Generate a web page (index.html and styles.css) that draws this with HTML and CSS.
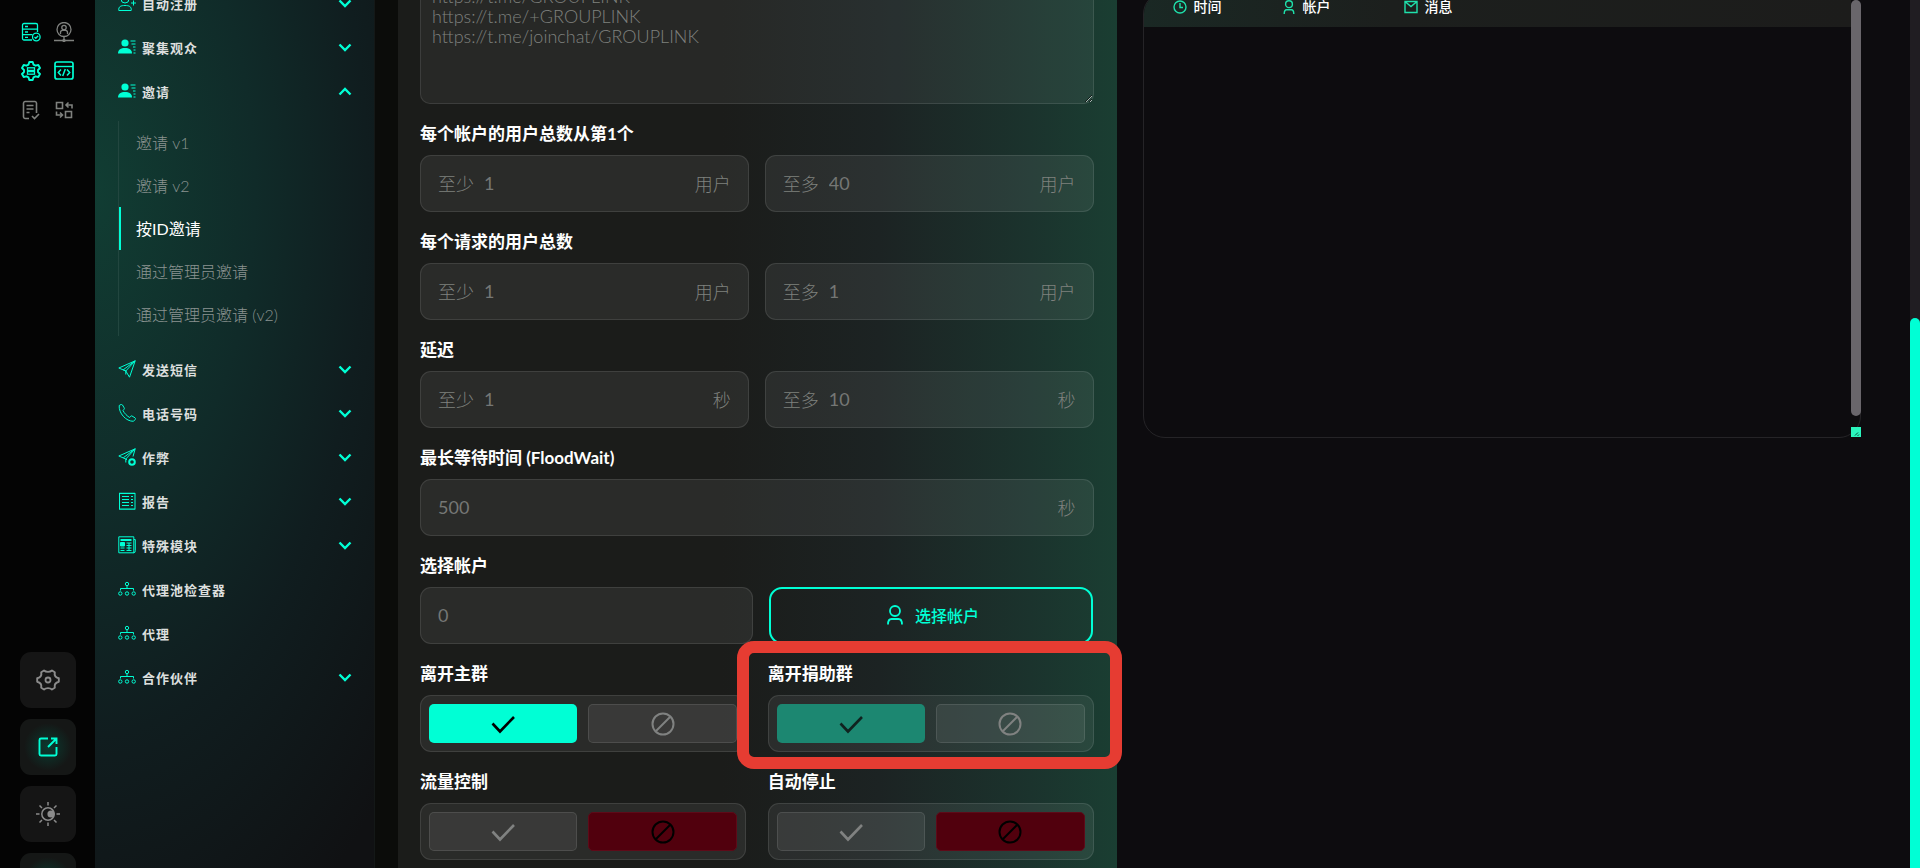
FILE: index.html
```html
<!DOCTYPE html>
<html lang="zh-CN">
<head>
  <meta charset="UTF-8">
  <meta name="viewport" content="width=device-width, initial-scale=1">
  <title>按ID邀请</title>
  <link rel="stylesheet" href="styles.css">
</head>
<body>

<!-- shared icons -->
<svg class="sprite" aria-hidden="true">
  <symbol id="i-down" viewBox="0 0 14 9"><path d="M1.500 1.500L7 7l5.500-5.500" stroke-width="2.400"/></symbol>
  <symbol id="i-up" viewBox="0 0 14 9"><path d="M1.500 7.500L7 2l5.500 5.500" stroke-width="2.400"/></symbol>
  <symbol id="i-people" viewBox="0 0 18 18">
    <circle cx="7" cy="5" r="3.6" fill="currentColor" stroke="none"/>
    <path d="M0 15.5c0-4 3-5.500 7-5.500s7 1.500 7 5.500z" fill="currentColor" stroke="none"/>
    <path d="M12.500 3h5M13.500 6h4M15 9h2.500M15.500 12h2M15.500 15h2"/>
  </symbol>
  <symbol id="i-net" viewBox="0 0 18 18">
    <circle cx="9" cy="4" r="1.700"/><path d="M9 6v3M2.500 10.500V8.500h13v2"/>
    <circle cx="2.300" cy="13.500" r="1.700"/><circle cx="9" cy="13.500" r="1.700"/><circle cx="15.700" cy="13.500" r="1.700"/>
  </symbol>
  <symbol id="i-user" viewBox="0 0 16 20"><circle cx="8" cy="6" r="5"/><path d="M1 19.500c0-4 1.500-5.500 3.500-5.500h7c2 0 3.500 1.500 3.500 5.500"/></symbol>
  <symbol id="i-check" viewBox="0 0 24 24"><path d="M1.500 11.500l7.500 8L23 5" stroke-width="2.600"/></symbol>
  <symbol id="i-ban" viewBox="0 0 24 24"><circle cx="12" cy="12" r="10.500" stroke-width="2"/><path d="M5 19L19 5" stroke-width="2"/></symbol>
</svg>

<nav class="rail" aria-label="面板">
  <div class="rail-top">
    <a class="on" href="#servers" aria-label="服务器"><svg viewBox="0 0 20 20"><path d="M11 18H3a1.500 1.500 0 0 1-1.500-1.500v-3.800h10M1.500 7.200h15M1.500 12.700V3A1.500 1.500 0 0 1 3 1.500h12A1.500 1.500 0 0 1 16.500 3v7M4 4.500h3M4 10h3M4 15.300h3"/><circle cx="15.300" cy="15" r="3.800"/><path d="M13.500 15l1.300 1.300 2.400-2.500"/></svg></a>
    <a href="#profile" aria-label="用户"><svg viewBox="0 0 20 20"><circle cx="10" cy="7.500" r="7"/><circle cx="10" cy="5.500" r="2.200"/><path d="M6.500 12V10.500c0-1.500 1-2.200 2-2.200h3c1 0 2 .7 2 2.200V12M10 15v3M0 18.500h20"/><circle cx="10" cy="18.500" r="1"/></svg></a>
    <a class="on" href="#config" aria-label="配置"><svg viewBox="0 0 20 20"><path d="M8.300 1h3.400l.8 2.600 2 1.100L17.300 4 19 7l-2 2v2l2 2-1.700 3-2.800-.7-2 1.100-.8 2.600H8.300l-.8-2.600-2-1.100-2.800.7L1 13l2-2V9L1 7l1.700-3 2.800.7 2-1.100z" stroke-width="1.900" stroke-linejoin="round"/><rect x="6.500" y="6.800" width="7" height="2.600"/><rect x="6.500" y="10.600" width="7" height="2.600"/></svg></a>
    <a class="on" href="#code" aria-label="代码"><svg viewBox="0 0 20 20"><rect x="1" y="1" width="18" height="17" rx="2" stroke-width="1.700"/><path d="M1 5.500h18" stroke-width="1.400"/><path d="M7 8.500l-2.700 3L7 14.500M13 8.500l2.700 3-2.700 3M11.300 8l-2.600 7" stroke-width="1.500"/></svg></a>
    <a href="#tasks" aria-label="任务"><svg viewBox="0 0 20 20"><path d="M8 18.500H4A1.800 1.800 0 0 1 2.500 17V3A1.800 1.800 0 0 1 4 1.500h10A1.800 1.800 0 0 1 15.500 3v10M5.500 5.500h7M5.500 9h7M5.500 12.500h3M11 16l2.500 2.500 4.500-4.500" stroke-width="1.600"/></svg></a>
    <a href="#swap" aria-label="转换"><svg viewBox="0 0 20 20"><path d="M2.500 2.500h6v6h-6zM11.500 11.500h6v6h-6zM18 8.500V5h-6M14.500 2.500L12 5l2.500 2.500M2.500 11.500V15h6M6 12.500L8.500 15 6 17.500" stroke-width="1.600"/></svg></a>
  </div>
  <div class="rail-bottom">
    <button type="button" aria-label="设置"><svg viewBox="0 0 24 24"><path d="M8 2.500c2 1.800 6 1.800 8 0l2.800 1.700c-.6 3 .8 5.300 4 6v3.600c-3.200.7-4.600 3-4 6L16 21.500c-2-1.800-6-1.800-8 0l-2.800-1.700c.6-3-.8-5.300-4-6v-3.600c3.200-.7 4.600-3 4-6z" stroke-width="1.900" stroke-linejoin="round"/><circle cx="12" cy="12" r="2.500" stroke-width="1.800"/></svg></button>
    <button class="on" type="button" aria-label="打开"><svg viewBox="0 0 24 24"><path d="M12 3.500H5A1.500 1.500 0 0 0 3.500 5v14A1.500 1.500 0 0 0 5 20.500h14a1.500 1.500 0 0 0 1.500-1.500v-7M15 3.500h5.500V9M20.500 3.500L12 12" stroke-width="1.900"/></svg></button>
    <button type="button" aria-label="主题"><svg viewBox="0 0 24 24"><circle cx="12" cy="12" r="6.200" stroke-width="1.500"/><circle cx="15" cy="12" r="3.600" fill="currentColor" stroke="none"/><path d="M12 0v3.500M12 20.500V24M0 12h3.500M20.500 12H24M3.500 3.500L6 6M18 18l2.500 2.500M3.500 20.500L6 18M18 6l2.500-2.500" stroke-width="1.500"/></svg></button>
    <button class="on" type="button" aria-label="帮助"></button>
  </div>
</nav>

<aside class="sidebar">
  <ul class="menu">
    <li><button type="button"><svg class="ico" viewBox="0 0 18 18"><circle cx="7" cy="5" r="4"/><path d="M.8 16.500c-.5-4 2-5 6.200-5s6.700 1 6.200 5zM13 9h5M15.500 6.500v5"/></svg>自动注册<svg class="chev"><use href="#i-down"/></svg></button></li>
    <li><button type="button"><svg class="ico"><use href="#i-people"/></svg>聚集观众<svg class="chev"><use href="#i-down"/></svg></button></li>
    <li>
      <button type="button" aria-expanded="true"><svg class="ico"><use href="#i-people"/></svg>邀请<svg class="chev"><use href="#i-up"/></svg></button>
      <ul class="submenu">
        <li><a href="#v1">邀请 v1</a></li>
        <li><a href="#v2">邀请 v2</a></li>
        <li><a class="active" href="#id">按ID邀请</a></li>
        <li><a href="#admin">通过管理员邀请</a></li>
        <li><a href="#admin2">通过管理员邀请 (v2)</a></li>
      </ul>
    </li>
    <li><button type="button"><svg class="ico" viewBox="0 0 18 18"><path d="M.8 8L17.200.8 11.500 17.200 7.800 11zM7.800 11l-2.500-1.200L17.200.8zM7.800 11v3.500"/></svg>发送短信<svg class="chev"><use href="#i-down"/></svg></button></li>
    <li><button type="button"><svg class="ico" viewBox="0 0 18 18"><path d="M1.200 1.500C.5 9 8 17.500 15.500 17.300l1.800-2c.4-.6.2-1-.3-1.500l-3-1.800c-.6-.3-1-.2-1.400.3l-.9 1.200C9.500 12.500 6 9 5 6.500l1-1.200c.4-.5.500-.9.200-1.400L4.500 1C4 .4 3.500.3 3 .5z"/></svg>电话号码<svg class="chev"><use href="#i-down"/></svg></button></li>
    <li><button type="button"><svg class="ico" viewBox="0 0 18 18"><path d="M9 11.800L7.800 11l-7-3L17.200.8 15 8.500M17.200.8L5.300 9.800M17.200.8L7.800 11v3.500"/><circle cx="14" cy="14" r="2.800" stroke-width="2"/></svg>作弊<svg class="chev"><use href="#i-down"/></svg></button></li>
    <li><button type="button"><svg class="ico" viewBox="0 0 18 18"><rect x="1.500" y="1.500" width="15.500" height="15.500"/><path d="M1.500 1h15.500M1.500 17.500h15.500" stroke-dasharray="1 1"/><path d="M4 4.500h7M4 7.500h7M4 10.500h7M4 13.500h7M13 4.500h2M13 7.500h2M13 10.500h2M13 13.500h2"/></svg>报告<svg class="chev"><use href="#i-down"/></svg></button></li>
    <li><button type="button"><svg class="ico" viewBox="0 0 18 18"><path d="M.8.8h15v16h-15zM15.800 3.500h1.500v11a2 2 0 0 1-2 2.300" /><path d="M2.500 4h11" stroke-width="2"/><path d="M2.500 6.500h4v3.500h-4z" fill="currentColor"/><path d="M8.500 7h5M8.500 9.500h5M2.500 12h4M8.500 12h5M2.500 14.500h4M8.500 14.500h5M11 7v8"/></svg>特殊模块<svg class="chev"><use href="#i-down"/></svg></button></li>
    <li><button type="button"><svg class="ico"><use href="#i-net"/></svg>代理池检查器</button></li>
    <li><button type="button"><svg class="ico"><use href="#i-net"/></svg>代理</button></li>
    <li><button type="button"><svg class="ico"><use href="#i-net"/></svg>合作伙伴<svg class="chev"><use href="#i-down"/></svg></button></li>
  </ul>
</aside>

<main class="main">
  <form class="panel">
    <textarea class="links" aria-label="链接" placeholder="https://t.me/GROUPLINK
https://t.me/+GROUPLINK
https://t.me/joinchat/GROUPLINK"></textarea>

    <fieldset class="field">
      <legend>每个帐户的用户总数从第1个</legend>
      <div class="row">
        <label class="box"><span>至少</span><input type="text" placeholder="1"><span>用户</span></label>
        <label class="box"><span>至多</span><input type="text" placeholder="40"><span>用户</span></label>
      </div>
    </fieldset>

    <fieldset class="field">
      <legend>每个请求的用户总数</legend>
      <div class="row">
        <label class="box"><span>至少</span><input type="text" placeholder="1"><span>用户</span></label>
        <label class="box"><span>至多</span><input type="text" placeholder="1"><span>用户</span></label>
      </div>
    </fieldset>

    <fieldset class="field">
      <legend>延迟</legend>
      <div class="row">
        <label class="box"><span>至少</span><input type="text" placeholder="1"><span>秒</span></label>
        <label class="box"><span>至多</span><input type="text" placeholder="10"><span>秒</span></label>
      </div>
    </fieldset>

    <fieldset class="field">
      <legend>最长等待时间 (FloodWait)</legend>
      <label class="box"><input type="text" placeholder="500" aria-label="最长等待时间"><span>秒</span></label>
    </fieldset>

    <fieldset class="field">
      <legend>选择帐户</legend>
      <div class="row accounts">
        <label class="box"><input type="text" placeholder="0" aria-label="帐户数"></label>
        <button class="pick" type="button"><svg><use href="#i-user"/></svg>选择帐户</button>
      </div>
    </fieldset>

    <div class="row switches">
      <fieldset class="field">
        <legend>离开主群</legend>
        <div class="toggle">
          <button class="yes" type="button" aria-label="是"><svg><use href="#i-check"/></svg></button>
          <button type="button" aria-label="否"><svg><use href="#i-ban"/></svg></button>
        </div>
      </fieldset>
      <div class="marked">
        <fieldset class="field">
          <legend>离开捐助群</legend>
          <div class="toggle">
            <button class="yes dim" type="button" aria-label="是"><svg><use href="#i-check"/></svg></button>
            <button type="button" aria-label="否"><svg><use href="#i-ban"/></svg></button>
          </div>
        </fieldset>
      </div>
      <fieldset class="field">
        <legend>流量控制</legend>
        <div class="toggle">
          <button type="button" aria-label="是"><svg><use href="#i-check"/></svg></button>
          <button class="no" type="button" aria-label="否"><svg><use href="#i-ban"/></svg></button>
        </div>
      </fieldset>
      <fieldset class="field">
        <legend>自动停止</legend>
        <div class="toggle">
          <button type="button" aria-label="是"><svg><use href="#i-check"/></svg></button>
          <button class="no" type="button" aria-label="否"><svg><use href="#i-ban"/></svg></button>
        </div>
      </fieldset>
    </div>
  </form>

  <section class="log">
    <table>
      <thead>
        <tr>
          <th class="c-time"><svg viewBox="0 0 14 14"><circle cx="7" cy="7" r="6"/><path d="M7 3v4.500h3"/></svg>时间</th>
          <th class="c-user"><svg viewBox="0 0 14 14"><circle cx="7" cy="4.200" r="3.400"/><path d="M2.200 14c0-3 1-4.200 2.400-4.200h4.800c1.400 0 2.400 1.200 2.400 4.200"/></svg>帐户</th>
          <th><svg viewBox="0 0 14 14"><path d="M1 1.500h12v11H1zM1 1.500l6 5 6-5"/></svg>消息</th>
        </tr>
      </thead>
    </table>
    <div class="log-bar">
      <div class="log-thumb"></div>
      <div class="log-grip"><svg viewBox="0 0 10 10"><path d="M4 8.500L7 5.500M6.500 9L8 7.500"/></svg></div>
    </div>
  </section>
</main>

<div class="page-bar"><div class="page-thumb"></div></div>

</body>
</html>
```
FILE: styles.css
```css
:root {
  --accent: #00ffd5;
  --muted: #7f817e;
  --line: rgba(255, 255, 255, .1);
}

* {
  box-sizing: border-box;
}

body {
  margin: 0;
  display: flex;
  height: 100vh;
  overflow: hidden;
  background: #0d0c0f;
  color: #fff;
  font-family: Lato, "Noto Sans CJK SC", sans-serif;
}

ul {
  margin: 0;
  padding: 0;
  list-style: none;
}

button {
  padding: 0;
  border: 0;
  background: none;
  color: inherit;
  font: inherit;
}

svg {
  flex: none;
  fill: none;
  stroke: currentColor;
}

.sprite {
  position: absolute;
  width: 0;
  height: 0;
}

/* left rail */
.rail {
  flex: none;
  display: flex;
  flex-direction: column;
  justify-content: space-between;
  width: 95px;
  padding: 22px 19px 0 20px;
  background: #040404;
}

.rail-top {
  display: grid;
  grid-template-columns: 22px 22px;
  gap: 19px 11px;
}

.rail-top a {
  display: flex;
  justify-content: center;
  color: var(--muted);
}

.rail-top a.on,
.rail-bottom .on {
  color: var(--accent);
}

.rail-top svg {
  width: 20px;
  height: 20px;
  stroke-width: 1.3;
}

.rail-bottom {
  display: flex;
  flex-direction: column;
  gap: 11px;
  margin-bottom: -41px;
}

.rail-bottom button {
  display: flex;
  align-items: center;
  justify-content: center;
  height: 56px;
  border-radius: 11px;
  background: #151515;
  color: #8b8b8b;
}

.rail-bottom .on {
  background: radial-gradient(circle, #0b3a30, #151716 60%);
}

.rail-bottom svg {
  width: 24px;
  height: 24px;
}

/* sidebar */
.sidebar {
  flex: none;
  width: 280px;
  border-right: 1px solid #141817;
  background: radial-gradient(ellipse 320px 640px at 0 22%, #113d33, #102b29 50%, #101d1f 85%, #101113 130%);
}

.menu {
  margin-top: -19px;
  padding: 0 22px 0 23px;
}

.menu button {
  display: flex;
  align-items: center;
  gap: 6px;
  width: 100%;
  height: 44px;
  color: #dcdfde;
  font-size: 13px;
  font-weight: 700;
  letter-spacing: 1px;
}

.ico {
  width: 18px;
  height: 18px;
  color: var(--accent);
}

.chev {
  width: 14px;
  height: 9px;
  margin-left: auto;
  color: var(--accent);
}

.submenu {
  margin: 8px 0 11px;
  border-left: 1px solid #22463f;
}

.submenu a {
  display: block;
  padding-left: 15px;
  border-left: 2px solid transparent;
  color: #8b9391;
  font-size: 16px;
  font-weight: 300;
  line-height: 43px;
  text-decoration: none;
}

.submenu .active {
  border-color: var(--accent);
  color: #fff;
  font-weight: 400;
}

/* form */
.main {
  flex: 1;
  display: grid;
  grid-template-columns: 1fr 1fr;
  align-items: start;
  gap: 26px;
  padding: 0 49px 0 23px;
  background: linear-gradient(90deg, #0b0c0a 23px, transparent 24px);
}

.panel {
  min-width: 0;
  min-height: 100vh;
  padding: 0 23px 18px 22px;
  background: linear-gradient(90deg, #1b1c1a 45%, #1c2323 67%, #1b332d 88%, #1a3e32);
}

.links {
  display: block;
  width: 100%;
  height: 134px;
  margin-top: -30px;
  padding: 15px 11px;
  border: 1px solid var(--line);
  border-radius: 10px;
  background: rgba(255, 255, 255, .055);
  font: 300 18px/20px Lato, "Noto Sans CJK SC", sans-serif;
}

::placeholder {
  color: var(--muted);
  opacity: 1;
}

.field {
  min-width: 0;
  margin: 18px 0 0;
  padding: 0;
  border: 0;
}

.field legend {
  padding: 0 0 9px;
  font-size: 17px;
  font-weight: 700;
  line-height: 24px;
}

.row {
  display: grid;
  grid-template-columns: 1fr 1fr;
  gap: 16px;
}

.row.accounts {
  grid-template-columns: 333fr 325fr;
}

.row.switches {
  column-gap: 22px;
  row-gap: 0;
}

.box {
  display: flex;
  align-items: center;
  gap: 10px;
  height: 57px;
  padding: 0 17px 2px;
  border: 1px solid var(--line);
  border-radius: 11px;
  background: rgba(255, 255, 255, .065);
  color: var(--muted);
  font-size: 18px;
  font-weight: 300;
}

.box input {
  flex: 1;
  min-width: 0;
  padding: 0;
  border: 0;
  background: none;
  color: #fff;
  font: 400 18px/24px Lato, sans-serif;
}

.box ::placeholder {
  color: #757775;
}

.pick {
  display: flex;
  align-items: center;
  justify-content: center;
  gap: 12px;
  padding: 0 0 2px 4px;
  border: 2px solid var(--accent);
  border-radius: 13px;
  color: var(--accent);
  font-size: 16px;
  font-weight: 500;
}

.pick svg {
  width: 16px;
  height: 20px;
  stroke-width: 1.8;
}

.toggle {
  display: flex;
  gap: 11px;
  height: 57px;
  padding: 8px;
  border: 1px solid var(--line);
  border-radius: 11px;
  background: rgba(255, 255, 255, .065);
}

.toggle button {
  flex: 1;
  display: flex;
  align-items: center;
  justify-content: center;
  border: 1px solid var(--line);
  border-radius: 5px;
  background: rgba(255, 255, 255, .07);
  color: #808281;
}

.toggle svg {
  width: 24px;
  height: 24px;
}

.toggle .yes {
  border-color: transparent;
  background: var(--accent) border-box;
  color: #000;
}

.toggle .dim {
  background: #1c8771 border-box;
  color: #10221f;
}

.toggle .no {
  border-color: #5e0a18;
  background: #51000d;
  color: #000;
}

/* annotation frame, overlaps the neighbours */
.marked {
  position: relative;
}

.marked::after {
  content: '';
  position: absolute;
  inset: -3px -28px -17px -31px;
  z-index: 1;
  border: 12px solid #e63c32;
  border-radius: 17px;
  pointer-events: none;
}

/* log */
.log {
  display: flex;
  height: 446px;
  margin-top: -8px;
  border: 1px solid #252427;
  border-radius: 22px;
}

.log table {
  flex: 1;
  align-self: flex-start;
  border-collapse: collapse;
  background: linear-gradient(90deg, #1a2824, #1c1f1d 35%, #1c1c1b);
  border-radius: 21px 0 0;
}

.log th {
  height: 34px;
  padding: 0 0 6px;
  font-size: 14px;
  font-weight: 500;
  text-align: left;
  line-height: 20px;
}

.log th svg {
  width: 14px;
  height: 14px;
  margin-right: 7px;
  color: #1fe0ab;
  stroke-width: 1.4;
  vertical-align: -2px;
}

.log .c-time {
  width: 138px;
  padding-left: 29px;
}

.log .c-user {
  width: 122px;
}

.log-bar {
  flex: none;
  display: flex;
  flex-direction: column;
  justify-content: space-between;
  width: 10px;
  margin-right: -1px;
}

.log-thumb {
  height: 416px;
  margin-top: 7px;
  border-radius: 5px;
  background: #69666b;
}

.log-grip {
  height: 10px;
  background: #2bf5bd;
  color: #084a3b;
}

.log-grip svg {
  display: block;
}

/* page scrollbar */
.page-bar {
  flex: none;
  display: flex;
  align-items: flex-end;
  width: 10px;
  background: #201d22;
}

.page-thumb {
  width: 10px;
  height: 550px;
  border-radius: 5px 5px 0 0;
  background: var(--accent);
}
```
